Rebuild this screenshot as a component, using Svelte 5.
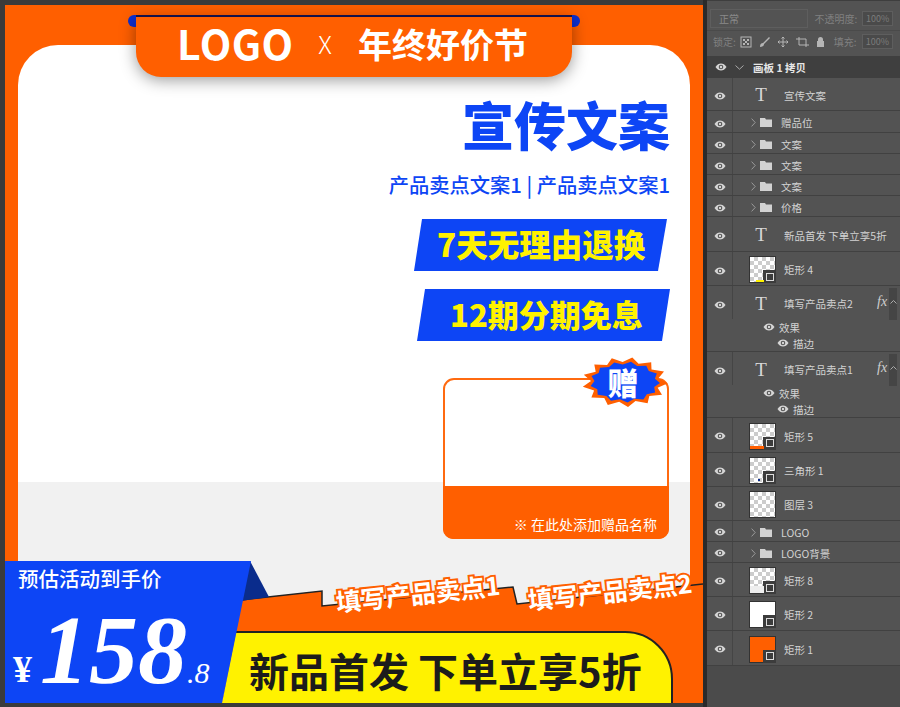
<script lang="ts">
	const layers = [
		{ kind: 'group', name: '赠品位', h: 22 },
		{ kind: 'group', name: '文案', h: 21 },
		{ kind: 'group', name: '文案', h: 21 },
		{ kind: 'group', name: '文案', h: 21 },
		{ kind: 'group', name: '价格', h: 21 },
		{ kind: 'text', name: '新品首发 下单立享5折', h: 35 },
		{ kind: 'shape', name: '矩形 4', h: 34, thumb: 'yellow' },
		{ kind: 'text', name: '填写产品卖点2', h: 66, fx: true },
		{ kind: 'text', name: '填写产品卖点1', h: 66, fx: true },
		{ kind: 'shape', name: '矩形 5', h: 35, thumb: 'orange-bar' },
		{ kind: 'shape', name: '三角形 1', h: 34, thumb: 'dot' },
		{ kind: 'shape', name: '图层 3', h: 34, thumb: 'empty', plain: true },
		{ kind: 'group', name: 'LOGO', h: 21 },
		{ kind: 'group', name: 'LOGO背景', h: 21 },
		{ kind: 'shape', name: '矩形 8', h: 34, thumb: 'grey' },
		{ kind: 'shape', name: '矩形 2', h: 34, thumb: 'white' },
		{ kind: 'shape', name: '矩形 1', h: 35, thumb: 'orange' }
	];

	// burst behind the gift label, spikes alternate between two ellipses
	function burst(cx: number, cy: number, n: number, outer: number[], inner: number[]) {
		const pts: string[] = [];
		for (let i = 0; i < n * 2; i++) {
			const a = (Math.PI * i) / n + 0.05;
			const [rx, ry] = i % 2 ? inner : outer;
			pts.push(`${(cx + rx * Math.cos(a)).toFixed(1)},${(cy + ry * Math.sin(a)).toFixed(1)}`);
		}
		return pts.join(' ');
	}
	const starOuter = burst(625, 382, 13, [43, 25], [34, 20]);
	const starInner = burst(625, 382, 13, [35, 20.5], [30.5, 17.5]);
</script>

{#snippet eye()}
	<svg class="eye" width="12" height="8" viewBox="0 0 12 8">
		<path d="M0.5 4C2 1.6 4 .5 6 .5s4 1.1 5.5 3.5C10 6.4 8 7.5 6 7.5S2 6.4.5 4z" fill="#d6d6d6" />
		<circle cx="6" cy="4" r="2.3" fill="#535353" />
		<circle cx="6" cy="4" r="1.2" fill="#d6d6d6" />
	</svg>
{/snippet}

{#snippet chevron()}
	<svg class="chev" width="5" height="9" viewBox="0 0 5 9">
		<path d="M.6.6 4.2 4.5.6 8.4" fill="none" stroke="#9a9a9a" stroke-width="1" />
	</svg>
{/snippet}

<div class="screen">
	<div class="stage">
		<svg class="poster" width="698" height="698" viewBox="5 5 698 698">
			<rect x="5" y="5" width="698" height="698" fill="#ff5f00" />
			<path d="M18 703V85a40 40 0 0 1 40-40H650a40 40 0 0 1 40 40V703z" fill="#fff" />
			<rect x="18" y="482" width="672" height="221" fill="#f1f1f1" />

			<text class="title" x="670" y="146" text-anchor="end">宣传文案</text>
			<text class="sub" x="670" y="193" text-anchor="end">产品卖点文案1 | 产品卖点文案1</text>

			<polygon points="422,219 667,219 658,271 414,271" fill="#0d45f5" />
			<text class="perk" x="437" y="257">7天无理由退换</text>
			<polygon points="425,289 670,289 662,341 417,341" fill="#0d45f5" />
			<text class="perk second" x="450" y="327">12期分期免息</text>

			<rect x="444" y="379" width="224" height="159" rx="10" fill="#fff" stroke="#ff6a10" stroke-width="2" />
			<path d="M443 486H669V529a10 10 0 0 1-10 10H453a10 10 0 0 1-10-10z" fill="#ff5f00" />
			<text class="gift-name" x="657" y="530" text-anchor="end">※ 在此处添加赠品名称</text>
			<polygon points={starOuter} fill="#ff5f00" />
			<polygon points={starInner} fill="#0d45f5" />
			<text class="gift-mark" x="623" y="395" text-anchor="middle">赠</text>

			<!-- torn orange strip -->
			<path d="M241 600 322 591V606L513 587 517 604 703 584V703H222z" fill="#ff5f00" />
			<path d="M241 600 322 591V606L513 587 517 604 703 584" fill="none" stroke="#222" stroke-width="1.5" />
			<path d="M222 703 236 632H625a47 47 0 0 1 47 47V703z" fill="#fff200" />
			<path d="M236 632H625a47 47 0 0 1 47 47V703" fill="none" stroke="#222" stroke-width="2" />
			<text class="deal" x="249" y="687">新品首发 下单立享5折</text>

			<polygon points="250,561 269,597 241,601" fill="#0a2c8c" />
			<polygon points="5,561 251,561 222,703 5,703" fill="#0d45f5" />
			<text class="est" x="18" y="587">预估活动到手价</text>
			<text class="yen" x="13" y="682">¥</text>
			<text class="price" x="40" y="683">158</text>
			<text class="cents" x="187" y="683">.8</text>

			<text class="point" transform="translate(337 612) rotate(-6)">填写产品卖点1</text>
			<text class="point" transform="translate(529 610) rotate(-6)">填写产品卖点2</text>

			<!-- logo tab, the blue bar only shows past its ends -->
			<rect x="128" y="15" width="452" height="12" rx="6" fill="#0d2fd0" />
			<path class="tab" d="M136 17H572V52a25 25 0 0 1-25 25H161a25 25 0 0 1-25-25z" fill="#ff5f00" />
			<rect x="136" y="15" width="436" height="2" fill="#14124a" />
			<text class="logo" x="177" y="60">LOGO</text>
			<text class="cross" x="325" y="54" text-anchor="middle">X</text>
			<text class="festival" x="358" y="58">年终好价节</text>
		</svg>
	</div>

	<aside class="panel">
		<div class="controls">
			<div class="bar">
				<div class="select">正常</div>
				<span class="lbl">不透明度:</span>
				<span class="num">100%</span>
			</div>
			<div class="bar lock">
				<span class="lbl">锁定:</span>
				<svg class="tools" width="88" height="12" viewBox="0 0 88 12">
					<rect x="1" y="1" width="10" height="10" fill="none" stroke="#b5b5b5" />
					<path d="M3 3h2v2H3zM7 3h2v2H7zM5 5h2v2H5zM3 7h2v2H3zM7 7h2v2H7z" fill="#b5b5b5" />
					<path d="M20 11c0-3 1-4 3-4l6-6 1 1-6 6c0 2-2 3-4 3z" fill="#b5b5b5" />
					<path d="M43 1v10M38 6h10M41.500 2.500 43 1l1.500 1.500M41.500 9.500 43 11l1.500-1.500M39.500 4.500 38 6l1.500 1.500M46.500 4.500 48 6l-1.500 1.500" fill="none" stroke="#b5b5b5" />
					<path d="M56 3h10v8M59 1v8h10" fill="none" stroke="#b5b5b5" />
					<path d="M78 5V3.500a2.500 2.500 0 0 1 5 0V5h1v6h-7V5z" fill="#b5b5b5" />
				</svg>
				<span class="lbl">填充:</span>
				<span class="num">100%</span>
			</div>
		</div>

		<div class="artboard">
			{@render eye()}
			<svg class="down" width="9" height="5" viewBox="0 0 9 5"><path d="M.5.5 4.500 4.200 8.500.5" fill="none" stroke="#aaa" /></svg>
			<span>画板 1 拷贝</span>
		</div>

		<div class="row low" style="height: 33px">
			<div class="main">
				<div class="eye-col">{@render eye()}</div>
				<span class="t">T</span>
				<span class="name">宣传文案</span>
			</div>
		</div>

		{#each layers as layer, i}
			<div class="row" class:low={i < 9} style="height: {layer.h}px">
				<div class="main" class:tall={layer.fx}>
					<div class="eye-col">{@render eye()}</div>
					{#if layer.kind === 'group'}
						{@render chevron()}
						<svg class="folder" width="12" height="9" viewBox="0 0 12 9">
							<path d="M0 0h5l1 1.500h6V9H0z" fill="#d2d2d2" />
						</svg>
						<span class="name group-name">{layer.name}</span>
					{:else if layer.kind === 'text'}
						<span class="t">T</span>
						<span class="name">{layer.name}</span>
						{#if layer.fx}
							<span class="scroll"></span>
							<span class="fx">fx</span>
							<svg class="up" width="7" height="4" viewBox="0 0 7 4"><path d="M.5 3.500 3.500.5l3 3" fill="none" stroke="#aaa" /></svg>
						{/if}
					{:else}
						<div class="thumb {layer.thumb}">
							{#if !layer.plain}
								<span class="mask"><i></i></span>
							{/if}
						</div>
						<span class="name">{layer.name}</span>
					{/if}
				</div>
				{#if layer.fx}
					<div class="effect first">{@render eye()}<span>效果</span></div>
					<div class="effect second">{@render eye()}<span>描边</span></div>
				{/if}
			</div>
		{/each}
	</aside>
</div>

<style>
	:global(body) {
		margin: 0;
	}

	.screen {
		display: flex;
		width: 900px;
		height: 707px;
		overflow: hidden;
		background: #2c2c2c;
		font-family: 'Noto Sans CJK SC', sans-serif;
	}

	.stage {
		width: 707px;
		height: 707px;
		box-sizing: border-box;
		padding: 5px 0 0 5px;
		background: linear-gradient(90deg, #3b3b3b 703px, #2a2a2a 703px);
		flex: none;
	}

	.poster {
		display: block;
	}

	text {
		font-family: 'Noto Sans CJK SC', sans-serif;
	}

	.title {
		font-size: 52px;
		font-weight: 900;
		fill: #0d45f5;
	}

	.sub {
		font-size: 20.300px;
		font-weight: 500;
		fill: #0d45f5;
	}

	.perk {
		font-size: 31.500px;
		font-weight: 900;
		fill: #fff200;
	}

	.perk.second {
		font-size: 31px;
	}

	.gift-name {
		font-size: 14px;
		fill: #fff;
	}

	.gift-mark {
		font-size: 31px;
		font-weight: 900;
		fill: #fff;
	}

	.deal {
		font-size: 40px;
		font-weight: 700;
		fill: #1c1c1c;
	}

	.est {
		font-size: 20.500px;
		font-weight: 500;
		fill: #fff;
	}

	.yen,
	.price {
		font-family: 'Liberation Serif', serif;
		font-weight: 700;
		fill: #fff;
	}

	.yen {
		font-size: 38px;
	}

	.price {
		font-size: 98px;
		font-style: italic;
	}

	.cents {
		font-family: 'Liberation Serif', serif;
		font-size: 30px;
		font-style: italic;
		fill: #fff;
	}

	.point {
		font-size: 25px;
		font-weight: 700;
		fill: #fff;
		stroke: #ff5f00;
		stroke-width: 4px;
		paint-order: stroke;
	}

	.tab {
		filter: drop-shadow(0 3px 8px rgba(0, 0, 0, 0.4));
	}

	.logo {
		font-size: 41px;
		font-weight: 700;
		fill: #fff;
		letter-spacing: 0.5px;
	}

	.cross {
		font-size: 25px;
		font-weight: 300;
		fill: #fff;
	}

	.festival {
		font-size: 34px;
		font-weight: 700;
		fill: #fff;
	}

	.panel {
		width: 193px;
		height: 707px;
		flex: none;
		background: #4b4b4b;
		color: #d2d2d2;
		font-size: 10.500px;
	}

	.controls {
		height: 56px;
		box-sizing: border-box;
		padding-top: 7px;
		background: #535353;
		border-top: 1px solid #3e3e3e;
	}

	.bar {
		display: flex;
		align-items: center;
		height: 21px;
		padding: 0 7px 0 3px;
		gap: 5px;
	}

	.bar.lock {
		margin-top: 1px;
		padding-left: 6px;
		border-top: 1px solid #4a4a4a;
		gap: 4px;
	}

	.select {
		width: 89px;
		height: 17px;
		line-height: 17px;
		padding-left: 8px;
		border: 1px solid #5e5e5e;
		margin-right: 1px;
		color: #8a8a8a;
		font-size: 10px;
	}

	.lbl {
		color: #808080;
		white-space: nowrap;
		font-size: 10px;
	}

	.num {
		width: 31px;
		height: 15px;
		line-height: 13px;
		text-align: center;
		margin-left: auto;
		background: #4a4a4a;
		color: #7c7c7c;
		border: 1px solid #5e5e5e;
		box-sizing: border-box;
		font-size: 9px;
	}

	.tools {
		margin-right: 2px;
	}

	.artboard {
		display: flex;
		align-items: center;
		height: 22px;
		background: #3f3f3f;
		font-weight: 700;
		color: #e6e6e6;
	}

	.artboard .eye {
		margin-left: 8px;
	}

	.down {
		margin-left: 8px;
		margin-right: 9px;
	}

	.row {
		box-sizing: border-box;
		background: #535353;
		border-bottom: 1px solid #414141;
	}

	.main {
		position: relative;
		display: flex;
		align-items: center;
		height: 100%;
	}

	.main > :not(.eye-col) {
		margin-top: 2px;
	}

	.main.tall {
		height: 33px;
	}

	.eye-col {
		display: flex;
		align-items: center;
		justify-content: center;
		width: 26px;
		height: 100%;
		flex: none;
		padding-top: 2px;
		border-right: 1px solid #454545;
		box-sizing: border-box;
	}

	.row.low .eye-col {
		padding-top: 4px;
	}

	.chev {
		margin-left: 18px;
		margin-right: 4px;
	}

	.folder {
		margin-right: 9px;
	}

	.t {
		width: 51px;
		padding-left: 5px;
		box-sizing: border-box;
		text-align: center;
		font-family: 'Liberation Serif', serif;
		font-size: 19px;
		color: #d8d8d8;
		flex: none;
	}

	.name {
		white-space: nowrap;
		color: #d2d2d2;
	}

	.fx {
		position: absolute;
		left: 170px;
		top: 6px;
		font-family: 'Liberation Serif', serif;
		font-style: italic;
		font-size: 14px;
		color: #cfcfcf;
	}

	.up {
		position: absolute;
		left: 183px;
		top: 12px;
	}

	.scroll {
		position: absolute;
		left: 182px;
		top: 0;
		width: 8px;
		height: 32px;
		background: rgba(0, 0, 0, 0.16);
	}

	.thumb {
		position: relative;
		width: 25px;
		height: 25px;
		margin-left: 17px;
		margin-right: 9px;
		flex: none;
		outline: 1px solid #333;
		background-color: #fff;
		background-image: conic-gradient(#ccc 25%, #fff 0 50%, #ccc 0 75%, #fff 0);
		background-size: 8px 8px;
	}

	.thumb.white {
		background: #fff;
	}

	.thumb.orange {
		background: #ff5f00;
	}

	.thumb.yellow::after,
	.thumb.orange-bar::after,
	.thumb.dot::after,
	.thumb.grey::after {
		content: '';
		position: absolute;
		left: 0;
		bottom: 0;
	}

	.thumb.yellow::after {
		left: 6px;
		width: 8px;
		height: 2px;
		background: #fff200;
	}

	.thumb.orange-bar::after {
		width: 14px;
		height: 3px;
		background: #ff5f00;
	}

	.thumb.dot::after {
		left: 8px;
		bottom: 2px;
		width: 2px;
		height: 2px;
		background: #0a2c8c;
	}

	.thumb.grey::after {
		width: 14px;
		height: 7px;
		background: #eee;
	}

	.mask {
		position: absolute;
		right: -1px;
		bottom: -1px;
		width: 13px;
		height: 13px;
		background: #3c3c3c;
		display: flex;
		align-items: center;
		justify-content: center;
	}

	.mask i {
		width: 6px;
		height: 6px;
		border: 1px solid #dcdcdc;
	}

	.effect {
		display: flex;
		align-items: center;
		height: 16px;
		gap: 4px;
	}

	.effect.first {
		padding-left: 56px;
	}

	.effect.second {
		padding-left: 70px;
	}
</style>
